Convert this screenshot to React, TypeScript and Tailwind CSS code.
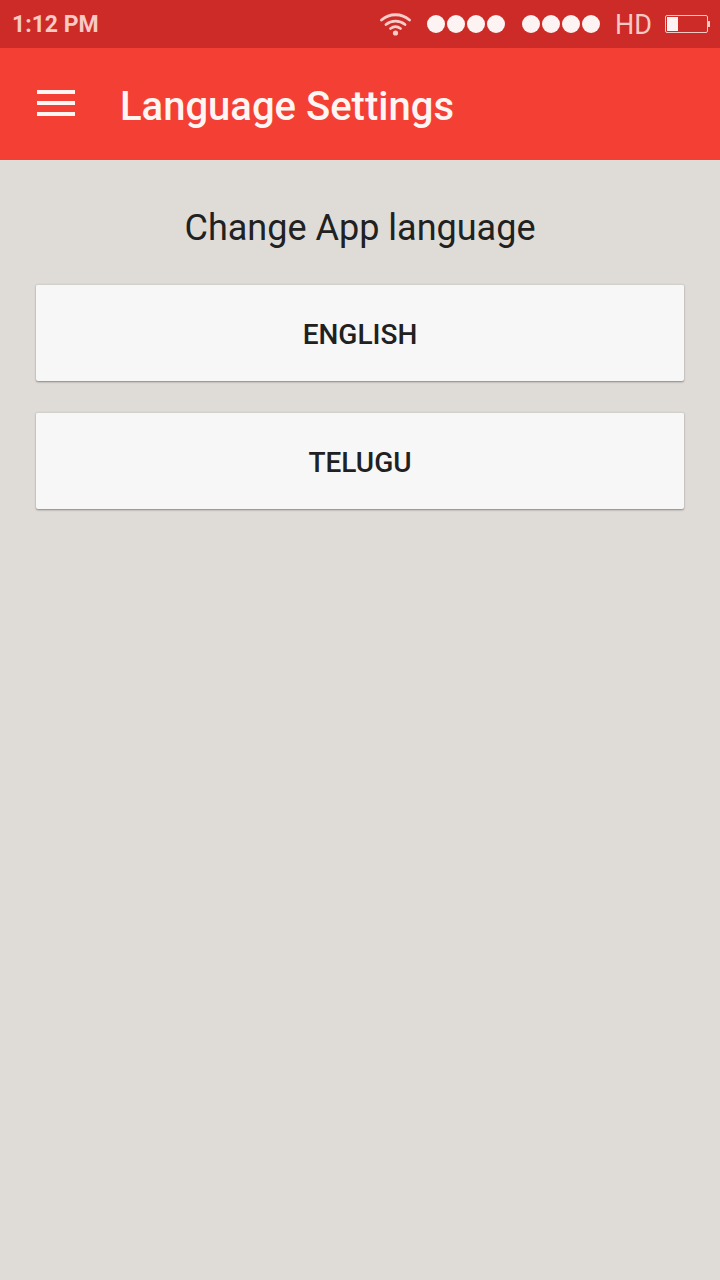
import React from 'react';

function WifiIcon() {
  return (
    <svg width="31" height="23" viewBox="0 0 31 23" fill="none" stroke="#f8cdc9" strokeWidth="2.8" strokeLinecap="round">
      <path d="M1.5 7 C9.5 0 21.5 0 29.5 7" />
      <path d="M6 11.5 C11.5 7 19.5 7 25 11.5" />
      <path d="M10.5 15.5 C13.5 13.2 17.5 13.2 20.5 15.5" />
      <circle cx="15.5" cy="20" r="2.6" fill="#f8cdc9" stroke="none" />
    </svg>
  );
}

function SignalDots() {
  return (
    <div className="flex gap-[2px]">
      <span className="w-[18px] h-[18px] rounded-full bg-[#fdf3f2]" />
      <span className="w-[18px] h-[18px] rounded-full bg-[#fdf3f2]" />
      <span className="w-[18px] h-[18px] rounded-full bg-[#fdf3f2]" />
      <span className="w-[18px] h-[18px] rounded-full bg-[#fdf3f2]" />
    </div>
  );
}

function Battery() {
  return (
    <div className="flex items-center">
      <div className="w-[43px] h-[18px] rounded-[2px] border border-[#f6c9c5] p-[1px]">
        <div className="w-[11px] h-full bg-[#fdf3f2]" />
      </div>
      <span className="w-[2px] h-[6px] bg-[#f6c9c5]" />
    </div>
  );
}

function LangButton({ label }: { label: string }) {
  return (
    <button className="w-full h-[97px] pt-1 bg-[#f8f7f7] rounded-[2px] border-t border-[#d2d1cc] shadow-[0_1px_2px_rgba(0,0,0,0.4)] text-[28px] font-medium text-[#212121]">
      {label}
    </button>
  );
}

export default function App() {
  return (
    <div className="min-h-screen h-[1280px] bg-[#dfdcd8] flex flex-col font-['Roboto',sans-serif]">
      {/* status bar */}
      <div className="h-12 bg-[#cd2b27] flex items-center pl-3 pr-[10px] justify-between">
        <span className="pt-[3px] text-[23px] font-bold text-[#f8c9c5]">1:12 PM</span>
        <div className="flex items-center">
          <WifiIcon />
          <div className="ml-[16px]"><SignalDots /></div>
          <div className="ml-[17px]"><SignalDots /></div>
          <span className="ml-[15px] pt-[2px] text-[27px] text-[#f6c9c5]">HD</span>
          <div className="ml-[13px]"><Battery /></div>
        </div>
      </div>

      {/* toolbar */}
      <div className="h-28 bg-[#f44034] flex items-center pl-[37px]">
        <div className="w-[38px] mb-[2px] flex flex-col gap-[7px]">
          <span className="h-1 bg-[#fff5f3]" />
          <span className="h-1 bg-[#fff5f3]" />
          <span className="h-1 bg-[#fff5f3]" />
        </div>
        <h1 className="ml-[45px] pt-[5px] text-[40px] font-medium text-[#fff5f3]">Language Settings</h1>
      </div>

      <div className="flex flex-col px-9 pt-[44px]">
        <p className="text-center text-[36px] leading-[48px] text-[#212121]">Change App language</p>
        <div className="mt-[32px] flex flex-col gap-[31px]">
          <LangButton label="ENGLISH" />
          <LangButton label="TELUGU" />
        </div>
      </div>
    </div>
  );
}
